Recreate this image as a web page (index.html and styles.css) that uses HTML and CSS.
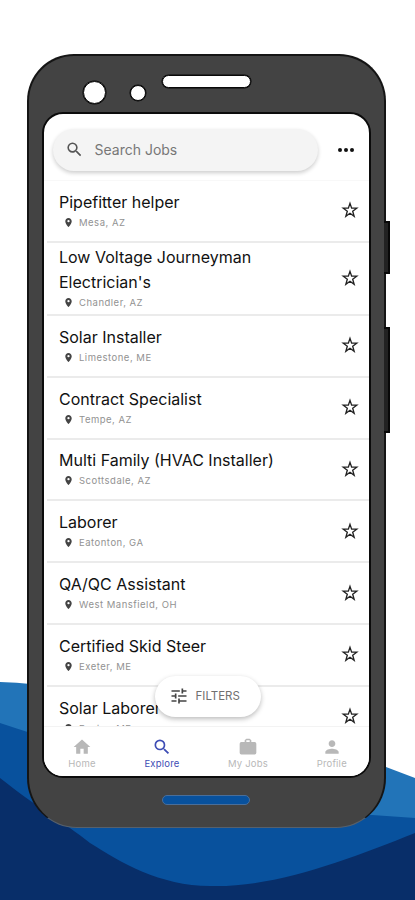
FILE: index.html
```html
<!DOCTYPE html>
<html lang="en">
<head>
<meta charset="utf-8">
<title>Explore Jobs</title>
<link rel="stylesheet" href="styles.css">
</head>
<body>
<svg class="symbols" aria-hidden="true">
  <symbol id="search" viewBox="0 0 24 24"><path d="M15.5 14h-.79l-.28-.27A6.47 6.47 0 0 0 16 9.5 6.5 6.5 0 1 0 9.500 16c1.610 0 3.090-.59 4.230-1.570l.27.28v.79l5 4.990L20.490 19l-4.990-5zm-6 0C7.010 14 5 11.990 5 9.500S7.010 5 9.500 5 14 7.010 14 9.500 11.990 14 9.500 14z"/></symbol>
  <symbol id="star" viewBox="0 0 24 24"><path d="M12 3.200l2.200 6.300 6.800.1-5.400 4.100 1.900 6.600-5.500-3.900-5.500 3.900 1.900-6.600L3 9.600l6.800-.1z" fill="none" stroke="currentColor" stroke-width="1.800" stroke-linejoin="miter"/></symbol>
  <symbol id="pin" viewBox="0 0 24 24"><path d="M12 2C8.130 2 5 5.130 5 9c0 5.250 7 13 7 13s7-7.750 7-13c0-3.870-3.130-7-7-7zm0 9.500a2.500 2.500 0 0 1 0-5 2.500 2.500 0 0 1 0 5z"/></symbol>
  <symbol id="tune" viewBox="0 0 24 24"><path d="M3 17v2h6v-2H3zM3 5v2h10V5H3zm10 16v-2h8v-2h-8v-2h-2v6h2zM7 9v2H3v2h4v2h2V9H7zm14 4v-2H11v2h10zm-6-4h2V7h4V5h-4V3h-2v6z"/></symbol>
  <symbol id="home" viewBox="0 0 24 24"><path d="M10 20v-6h4v6h5v-8h3L12 3 2 12h3v8z"/></symbol>
  <symbol id="case" viewBox="0 0 24 24"><path d="M20 6h-4V4l-2-2h-4L8 4v2H4a2 2 0 0 0-2 2v11a2 2 0 0 0 2 2h16a2 2 0 0 0 2-2V8a2 2 0 0 0-2-2zm-6 0h-4V4h4v2z"/></symbol>
  <symbol id="person" viewBox="0 0 24 24"><path d="M12 12c2.210 0 4-1.790 4-4s-1.790-4-4-4-4 1.790-4 4 1.790 4 4 4zm0 2c-2.670 0-8 1.340-8 4v2h16v-2c0-2.660-5.330-4-8-4z"/></symbol>
</svg>
<div class="stage">
  <svg class="waves" viewBox="0 0 415 220" aria-hidden="true">
    <path fill="#2274b8" d="M0 2C90 5 180 35 260 67 320 91 350 78 386 87L415 98V220H0z"/>
    <path fill="#08519d" d="M0 43C100 75 180 106 260 118 315 126 340 132 372 135L415 138V220H0z"/>
    <path fill="#082e69" d="M0 98C35 126 65 143 90 163 120 182 160 206 210 206 275 208 350 179 415 153V220H0z"/>
  </svg>
  <div class="phone">
    <i class="side power"></i><i class="side volume"></i>
    <div class="sensors"><i class="camera"></i><i class="lens"></i><i class="speaker"></i></div>
    <div class="screen">
      <header class="top">
        <div class="search"><svg><use href="#search"/></svg><span>Search Jobs</span></div>
        <div class="more"><i></i><i></i><i></i></div>
      </header>
      <main class="list">
        <article class="job"><div class="info"><h2>Pipefitter helper</h2><p><svg><use href="#pin"/></svg><span>Mesa, AZ</span></p></div><svg class="star"><use href="#star"/></svg></article>
        <article class="job tall"><div class="info"><h2>Low Voltage Journeyman Electrician's</h2><p><svg><use href="#pin"/></svg><span>Chandler, AZ</span></p></div><svg class="star"><use href="#star"/></svg></article>
        <article class="job"><div class="info"><h2>Solar Installer</h2><p><svg><use href="#pin"/></svg><span>Limestone, ME</span></p></div><svg class="star"><use href="#star"/></svg></article>
        <article class="job"><div class="info"><h2>Contract Specialist</h2><p><svg><use href="#pin"/></svg><span>Tempe, AZ</span></p></div><svg class="star"><use href="#star"/></svg></article>
        <article class="job"><div class="info"><h2>Multi Family (HVAC Installer)</h2><p><svg><use href="#pin"/></svg><span>Scottsdale, AZ</span></p></div><svg class="star"><use href="#star"/></svg></article>
        <article class="job"><div class="info"><h2>Laborer</h2><p><svg><use href="#pin"/></svg><span>Eatonton, GA</span></p></div><svg class="star"><use href="#star"/></svg></article>
        <article class="job"><div class="info"><h2>QA/QC Assistant</h2><p><svg><use href="#pin"/></svg><span>West Mansfield, OH</span></p></div><svg class="star"><use href="#star"/></svg></article>
        <article class="job"><div class="info"><h2>Certified Skid Steer</h2><p><svg><use href="#pin"/></svg><span>Exeter, ME</span></p></div><svg class="star"><use href="#star"/></svg></article>
        <article class="job"><div class="info"><h2>Solar Laborer</h2><p><svg><use href="#pin"/></svg><span>Exeter, ME</span></p></div><svg class="star"><use href="#star"/></svg></article>
      </main>
      <button class="filters"><svg><use href="#tune"/></svg><span>FILTERS</span></button>
      <nav class="tabs">
        <a><svg><use href="#home"/></svg><span>Home</span></a>
        <a class="active"><svg><use href="#search"/></svg><span>Explore</span></a>
        <a><svg><use href="#case"/></svg><span>My Jobs</span></a>
        <a class="last"><svg><use href="#person"/></svg><span>Profile</span></a>
      </nav>
    </div>
    <div class="chin"><i></i></div>
  </div>
</div>
</body>
</html>
```
FILE: styles.css
```css
* { box-sizing: border-box; }
body { margin: 0; background: #fff; font-family: Inter, "Liberation Sans", sans-serif; }
svg { display: block; fill: currentColor; flex: none; }
.symbols { position: absolute; width: 0; height: 0; }
.stage { position: relative; width: 415px; height: 900px; overflow: hidden; padding: 54px 0 0 26.5px; }
.waves { position: absolute; left: 0; bottom: 0; width: 415px; height: 220px; }
.phone { position: relative; width: 359.500px; height: 773.500px; background: #434343; border: 2px solid #151515; border-bottom: 1px solid #56606c; border-radius: 47px 47px 50px 50px; padding: 0 13.500px; }
.side { position: absolute; left: 355px; width: 6px; background: #222; border: 2px solid #080808; border-left: 0; }
.power { top: 165px; height: 53px; }
.volume { top: 271px; height: 106px; }
.sensors { display: flex; align-items: flex-start; height: 56px; }
.sensors i { background: #fff; border: 1.500px solid #090909; box-shadow: 0 0 0 .5px #090909; }
.camera { width: 23px; height: 23px; border-radius: 50%; margin: 25px 0 0 41px; }
.lens { width: 16px; height: 16px; border-radius: 50%; margin: 28.500px 0 0 24px; }
.speaker { width: 89px; height: 13px; border-radius: 7px; margin: 19px 0 0 16px; }
.screen { position: relative; display: flex; flex-direction: column; height: 665.500px; background: #fff; border: 2px solid #0b0b0b; border-radius: 21px; overflow: hidden; }
.top { display: flex; align-items: center; height: 67px; padding: 5px 14.500px 0 9px; border-bottom: 1px solid #f8f8f8; flex: none; }
.search { display: flex; align-items: center; width: 265px; height: 42px; border-radius: 21px; background: #f4f4f4; box-shadow: 0 2px 4px #0003; color: #777; padding-left: 12px; font-size: 14px; }
.search svg { width: 19px; height: 19px; margin-right: 10.500px; color: #555; }
.more { display: flex; gap: 2px; margin-left: auto; }
.more i { width: 4px; height: 4px; border-radius: 50%; background: #111; }
.list { flex: 1; min-height: 0; overflow: hidden; }
.job { display: flex; align-items: center; justify-content: space-between; height: 61.850px; margin-left: 3px; padding: 0 10px 1px 12px; border-bottom: 2px solid #ebebeb; }
.job.tall { height: 73px; }
.info { width: 235px; margin-bottom: 1px; }
h2 { margin: 0; font-size: 16px; line-height: 25px; font-weight: 400; color: #111; }
.info p { display: flex; align-items: center; margin: 0; height: 15px; padding-left: 4px; gap: 5px; font-size: 9.500px; letter-spacing: .5px; color: #929292; }
.info p svg { width: 11px; height: 11px; color: #444; }
.star { width: 18px; height: 18px; color: #222; }
.filters { position: absolute; left: 111px; top: 562px; display: flex; align-items: center; width: 106px; height: 40.500px; border: 0; border-radius: 21px; background: #fff; box-shadow: 0 2px 5px #0004; padding: 0 0 0 14px; gap: 6.500px; font: 400 11.500px Inter, sans-serif; color: #707070; }
.filters svg { width: 20px; height: 20px; color: #444; }
.tabs { display: grid; grid-template-columns: 76px 84px 88px 1fr; height: 50px; flex: none; border-top: 1px solid #f3f3f3; background: #fff; color: #b8b8b8; font-size: 9.500px; letter-spacing: .2px; }
.tabs a { display: flex; flex-direction: column; align-items: center; padding-top: 10px; }
.tabs .last { padding-left: 3px; }
.tabs svg { width: 20px; height: 20px; }
.tabs span { line-height: 13px; }
.tabs .active { color: #3e4db5; }
.chin { display: flex; justify-content: center; padding-top: 17px; }
.chin i { width: 88px; height: 10px; border: 1px solid #496e9a; border-radius: 5px; background: #08519d; }
```
